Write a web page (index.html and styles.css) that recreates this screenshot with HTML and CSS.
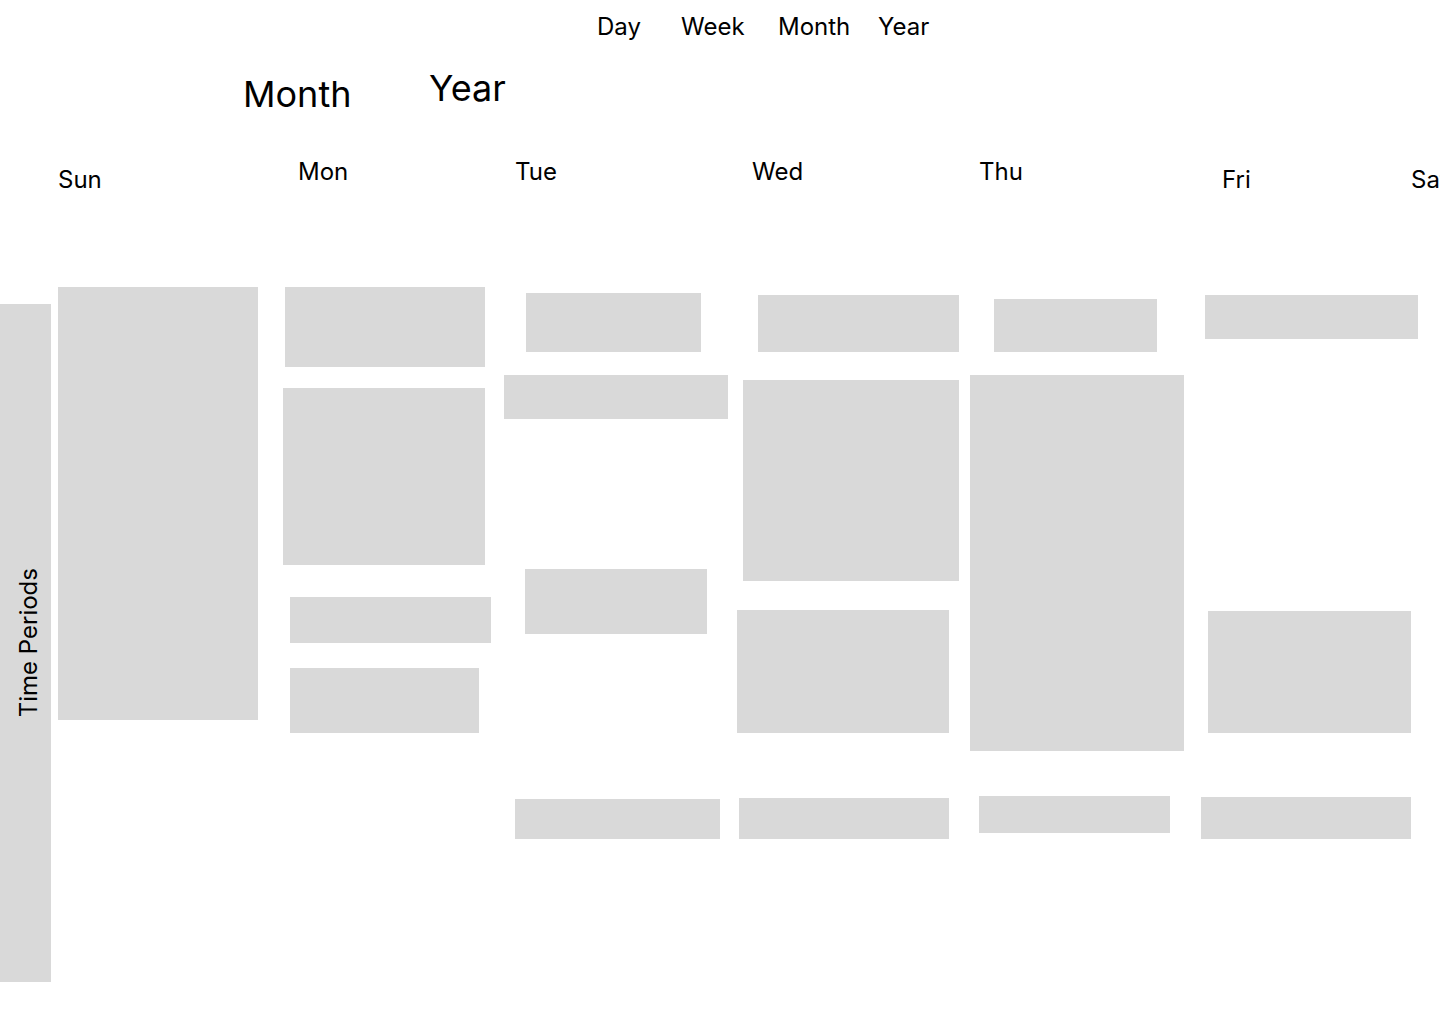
FILE: index.html
```html
<!DOCTYPE html>
<html lang="en">
<head>
    <meta charset="UTF-8">
    <title>Calendar</title>
    <link rel="stylesheet" href="styles.css">
</head>
<body>
    <nav class="nav">
        <a class="nav-item day-link">Day</a>
        <a class="nav-item week-link">Week</a>
        <a class="nav-item month-link">Month</a>
        <a class="nav-item">Year</a>
    </nav>

    <div class="views">
        <span class="view month-view">Month</span>
        <span class="view year-view">Year</span>
    </div>

    <div class="days">
        <span class="low">Sun</span>
        <span>Mon</span>
        <span>Tue</span>
        <span>Wed</span>
        <span>Thu</span>
        <span class="low">Fri</span>
        <span class="low">Sat</span>
    </div>

    <div class="board">
        <!-- Sun -->
        <div class="col first">
            <div class="periods"><span>Time Periods</span></div>
            <div class="slot" style="left:58px;top:0;width:200px;height:433px"></div>
        </div>
        <!-- Mon -->
        <div class="col">
            <div class="slot" style="left:2px;top:0;width:200px;height:80px"></div>
            <div class="slot" style="left:0;top:101px;width:202px;height:177px"></div>
            <div class="slot" style="left:7px;top:310px;width:201px;height:46px"></div>
            <div class="slot" style="left:7px;top:381px;width:189px;height:65px"></div>
        </div>
        <!-- Tue -->
        <div class="col">
            <div class="slot" style="left:22px;top:6px;width:175px;height:59px"></div>
            <div class="slot" style="left:0;top:88px;width:224px;height:44px"></div>
            <div class="slot" style="left:21px;top:282px;width:182px;height:65px"></div>
            <div class="slot" style="left:11px;top:512px;width:205px;height:40px"></div>
        </div>
        <!-- Wed -->
        <div class="col">
            <div class="slot" style="left:21px;top:8px;width:201px;height:57px"></div>
            <div class="slot" style="left:6px;top:93px;width:216px;height:201px"></div>
            <div class="slot" style="left:0;top:323px;width:212px;height:123px"></div>
            <div class="slot" style="left:2px;top:511px;width:210px;height:41px"></div>
        </div>
        <!-- Thu -->
        <div class="col">
            <div class="slot" style="left:24px;top:12px;width:163px;height:53px"></div>
            <div class="slot" style="left:0;top:88px;width:214px;height:376px"></div>
            <div class="slot" style="left:9px;top:509px;width:191px;height:37px"></div>
        </div>
        <!-- Fri -->
        <div class="col">
            <div class="slot" style="left:4px;top:8px;width:213px;height:44px"></div>
            <div class="slot" style="left:7px;top:324px;width:203px;height:122px"></div>
            <div class="slot" style="left:0;top:510px;width:210px;height:42px"></div>
        </div>
    </div>
</body>
</html>
```

FILE: styles.css
```css
body {
    margin: 0;
    width: 1440px;
    height: 1024px;
    overflow: hidden;
    background: #fff;
    color: #000;
    font-family: Inter, "Noto Sans", sans-serif;
    font-size: 24px;
    line-height: 29px;
}

.nav {
    display: flex;
    height: 29px;
    padding: 12px 0 0 597px;
}
.nav-item {
    cursor: pointer;
}
.day-link { width: 84px; }
.week-link { width: 97px; }
.month-link { width: 100px; }

.views {
    display: flex;
    align-items: flex-start;
    height: 116px;
    padding-left: 243px;
}
.view {
    font-size: 36px;
    line-height: 44px;
}
.month-view {
    width: 186px;
    margin-top: 31px;
}
.year-view {
    margin-top: 25px;
}

.days {
    display: grid;
    grid-template-columns: 240px 217px 237px 227px 243px 189px auto;
    align-items: start;
    height: 130px;
    padding-left: 58px;
    white-space: nowrap;
}
.days .low {
    margin-top: 8px;
}

.board {
    display: grid;
    grid-template-columns: 58px 225px 221px 233px 233px 231px 239px;
    height: 695px;
}
.col {
    position: relative;
}
.col.first {
    grid-column: 1 / 3;
}
.slot {
    position: absolute;
    background: #d9d9d9;
}

.periods {
    position: absolute;
    left: 0;
    top: 17px;
    width: 51px;
    height: 678px;
    padding-left: 6px;
    box-sizing: border-box;
    background: #d9d9d9;
    display: flex;
    align-items: center;
    justify-content: center;
}
.periods span {
    writing-mode: vertical-rl;
    transform: rotate(180deg);
    white-space: nowrap;
}
```
